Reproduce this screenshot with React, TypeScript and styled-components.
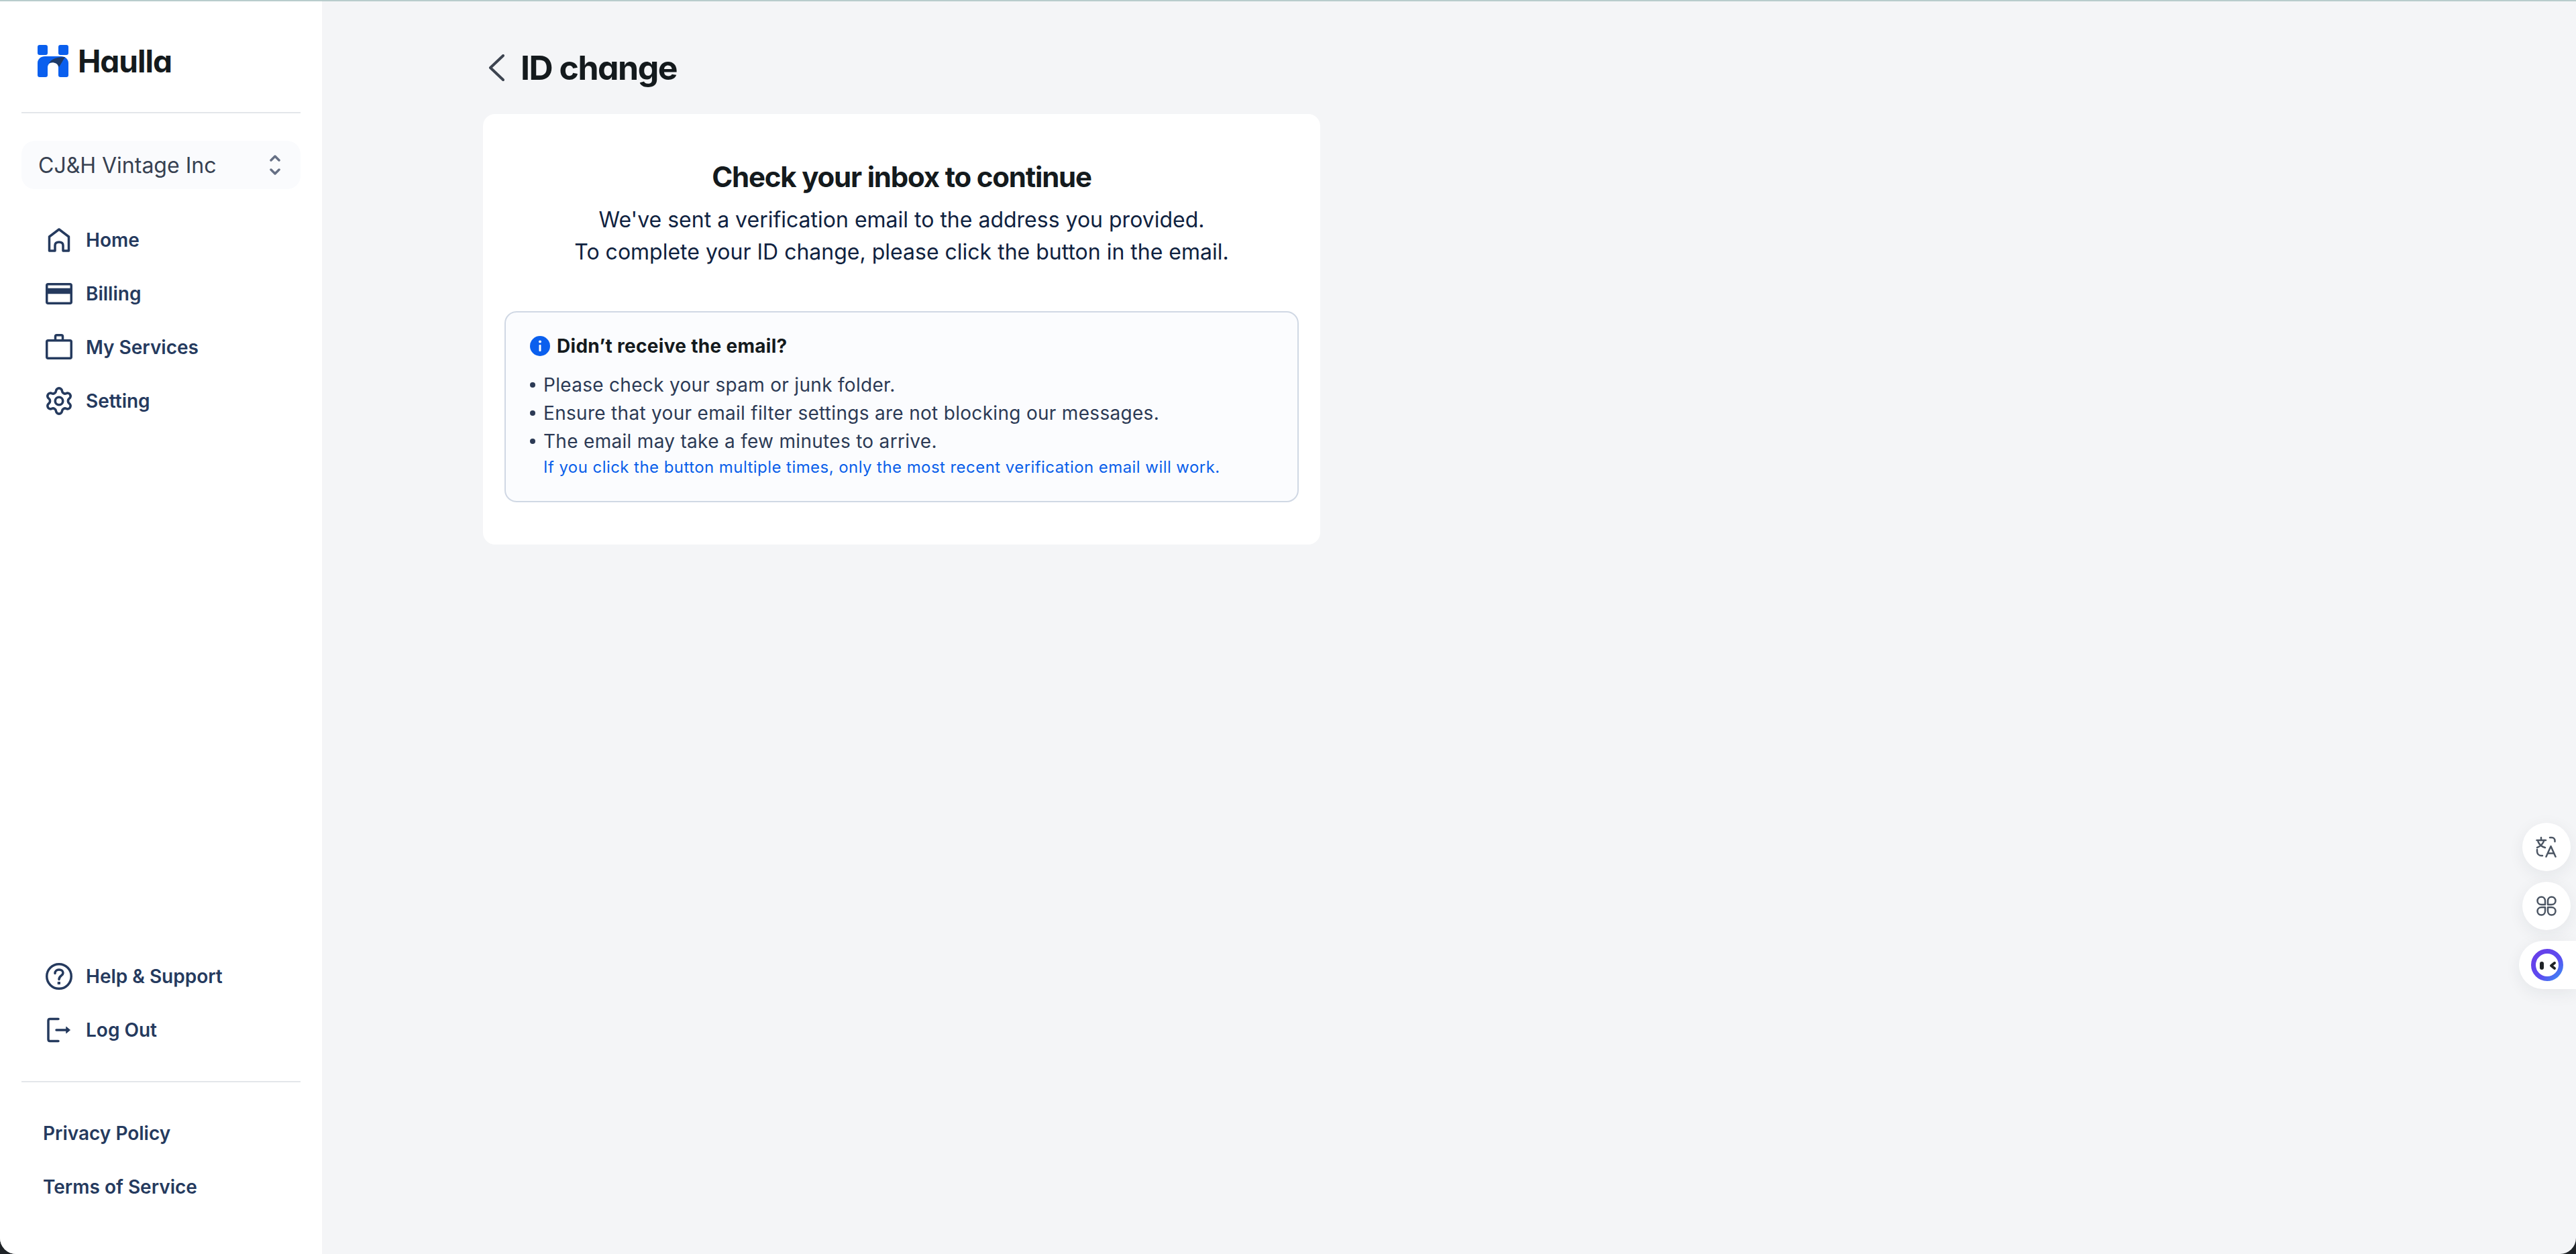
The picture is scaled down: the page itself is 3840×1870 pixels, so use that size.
import React from 'react';
import styled, { createGlobalStyle } from 'styled-components';
import { Settings } from 'lucide-react';

const GlobalStyle = createGlobalStyle`
  html, body {
    margin: 0;
    padding: 0;
    height: 100%;
    background: #1f2327;
  }
  #root {
    height: 100%;
  }
  * {
    box-sizing: border-box;
  }
`;

const Page = styled.div`
  position: relative;
  display: flex;
  height: 100vh;
  overflow: hidden;
  border-top: 2px solid #b8cccc;
  border-radius: 0 0 24px 24px;
  background: #f4f5f7;
  font-family: Inter, 'Liberation Sans', sans-serif;
`;

const Sidebar = styled.aside`
  display: flex;
  flex-direction: column;
  flex: none;
  width: 480px;
  padding: 0 32px 60px;
  background: #ffffff;
`;

const LogoRow = styled.div`
  display: flex;
  align-items: center;
  gap: 14px;
  height: 165px;
  padding: 12px 0 0 24px;
`;

const LogoText = styled.span`
  font-size: 46px;
  font-weight: 700;
  letter-spacing: -1px;
  color: #141a1d;
  font-feature-settings: 'cv11' 1;
`;

const Divider = styled.hr`
  flex: none;
  width: 100%;
  height: 2px;
  margin: 0;
  border: 0;
  background: #e3e6ea;
`;

const Select = styled.div`
  display: flex;
  align-items: center;
  justify-content: space-between;
  flex: none;
  height: 72px;
  margin-top: 41px;
  padding: 0 30px 0 25px;
  border-radius: 20px;
  background: #fafbfd;
  font-size: 32px;
  color: #374151;
`;

const Nav = styled.nav<{ $bottom?: boolean }>`
  display: flex;
  flex-direction: column;
  margin-top: ${({ $bottom }) => ($bottom ? 'auto' : '36px')};
  margin-bottom: ${({ $bottom }) => ($bottom ? '36px' : '0')};
`;

const NavItem = styled.a`
  display: flex;
  align-items: center;
  gap: 20px;
  height: 80px;
  padding-left: 36px;
  font-size: 28px;
  font-weight: 600;
  color: #253a5e;
`;

const FooterLinks = styled.div`
  display: flex;
  flex-direction: column;
  margin-top: 36px;
`;

const FooterLink = styled.a`
  display: flex;
  align-items: center;
  height: 80px;
  padding-left: 32px;
  font-size: 28px;
  font-weight: 600;
  color: #253a5e;
`;

const Main = styled.main`
  flex: 1;
  padding: 0 0 0 240px;
`;

const TitleRow = styled.div`
  display: flex;
  align-items: center;
  gap: 24px;
  height: 168px;
  padding: 30px 0 0 8px;
`;

const Title = styled.h1`
  margin: 0;
  font-size: 50px;
  font-weight: 700;
  letter-spacing: -1.5px;
  color: #141a1d;
  font-feature-settings: 'cv11' 1;
`;

const Card = styled.section`
  width: 1248px;
  height: 642px;
  padding: 64px 32px 0;
  border-radius: 18px;
  background: #ffffff;
`;

const CardTitle = styled.h2`
  margin: 0 0 10px;
  font-size: 42px;
  line-height: 60px;
  font-weight: 700;
  letter-spacing: -1.2px;
  text-align: center;
  color: #141a1d;
  font-feature-settings: 'cv11' 1;
`;

const CardText = styled.p`
  margin: 0;
  font-size: 32px;
  line-height: 48px;
  text-align: center;
  color: #0f2240;
`;

const InfoBox = styled.div`
  height: 285px;
  margin-top: 64px;
  padding: 30px 36px 0;
  border: 2px solid #d0d8e4;
  border-radius: 18px;
  background: #fbfcfe;
`;

const InfoHeading = styled.div`
  display: flex;
  align-items: center;
  gap: 10px;
  height: 40px;
  margin-bottom: 17px;
  font-size: 28px;
  font-weight: 700;
  letter-spacing: 0.3px;
  color: #141a1d;
`;

const InfoList = styled.ul`
  margin: 0;
  padding: 0;
  list-style: none;
`;

const InfoItem = styled.li`
  display: flex;
  gap: 12px;
  font-size: 28px;
  line-height: 42px;
  letter-spacing: 0.3px;
  color: #2c3a55;
  &::before {
    content: '';
    flex: none;
    width: 8px;
    height: 8px;
    margin-top: 17px;
    border-radius: 50%;
    background: #2c3a55;
  }
`;

const InfoNote = styled.div`
  padding-left: 20px;
  font-size: 24px;
  line-height: 36px;
  letter-spacing: 0.44px;
  color: #0a5fea;
`;

const FloatingDock = styled.div`
  position: absolute;
  right: 0;
  top: 1225px;
  display: flex;
  flex-direction: column;
  align-items: flex-end;
  gap: 16px;
`;

const DockButton = styled.div<{ $docked?: boolean }>`
  display: flex;
  align-items: center;
  justify-content: center;
  width: ${({ $docked }) => ($docked ? '85px' : '72px')};
  height: 72px;
  margin-right: ${({ $docked }) => ($docked ? '0' : '8px')};
  padding-right: ${({ $docked }) => ($docked ? '1px' : '0')};
  border-radius: ${({ $docked }) => ($docked ? '36px 0 0 36px' : '50%')};
  background: #ffffff;
  box-shadow: 0 6px 24px rgba(31, 41, 55, 0.07);
`;

const SettingsIcon = styled(Settings)`
  margin: -3px;
  flex: none;
`;

function Logo() {
  return (
    <svg width="46" height="48" viewBox="0 0 46 48">
      <rect x="0" y="0" width="15" height="15" rx="3" fill="#0a5fee" />
      <rect x="31" y="0" width="15" height="15" rx="3" fill="#0a5fee" />
      <path
        d="M0 27C0 21 5 17 11 17H35C41 17 46 21 46 27V45C46 47 45 48 43 48H34C32 48 31 47 31 45V34C31 29 28 26 23 26C18 26 15 29 15 34V45C15 47 14 48 12 48H3C1 48 0 47 0 45Z"
        fill="#0a5fee"
      />
      <path d="M17 27C21 21 28 18 41 18C38 23 35 28 32 33C30 28 25 25 17 27Z" fill="#1f3a66" />
    </svg>
  );
}

function NavIcon({ children }: { children: React.ReactNode }) {
  return (
    <svg
      width="40"
      height="40"
      viewBox="0 0 40 40"
      fill="none"
      stroke="#253a5e"
      strokeWidth="3.5"
      strokeLinejoin="round"
      strokeLinecap="round"
    >
      {children}
    </svg>
  );
}

const HomeIcon = () => (
  <NavIcon>
    <path d="M5.500 36V15L20 4L34.500 15V36H26V28C26 25 24 23 20 23C16 23 14 25 14 28V36Z" />
  </NavIcon>
);

const CardIcon = () => (
  <NavIcon>
    <rect x="1.750" y="5.750" width="36.500" height="28.500" rx="2" />
    <rect x="1.750" y="13.500" width="36.500" height="5" fill="#253a5e" />
  </NavIcon>
);

const BriefcaseIcon = () => (
  <NavIcon>
    <rect x="1.750" y="9.750" width="36.500" height="26.500" rx="2" />
    <path d="M14.500 9V4C14.500 2.500 15.500 1.750 16.500 1.750H23.500C24.500 1.750 25.500 2.500 25.500 4V9" />
  </NavIcon>
);

const HelpIcon = () => (
  <NavIcon>
    <circle cx="20" cy="20" r="18.250" />
    <path d="M14 15.500C14 12 16.500 10 20 10C23.500 10 26 12 26 15C26 19 20 19 20 24.500" />
    <rect x="18.500" y="28.500" width="3" height="3" fill="#253a5e" strokeWidth="1" />
  </NavIcon>
);

const LogoutIcon = () => (
  <NavIcon>
    <path d="M19 3.500H6.500C5 3.500 4 4.500 4 6V34C4 35.500 5 36.500 6.500 36.500H19" />
    <path d="M16 20H32" />
    <path d="M31 15.500L36.500 20L31 24.500Z" fill="#253a5e" strokeWidth="1" />
  </NavIcon>
);

const ChevronUpDown = () => (
  <svg width="16" height="30" viewBox="0 0 16 30" fill="none" stroke="#667085" strokeWidth="3.500" strokeLinecap="round" strokeLinejoin="round">
    <path d="M2 8L8 2L14 8" />
    <path d="M2 22L8 28L14 22" />
  </svg>
);

const BackChevron = () => (
  <svg width="24" height="40" viewBox="0 0 24 40" fill="none" stroke="#3d4450" strokeWidth="4" strokeLinecap="round" strokeLinejoin="round">
    <path d="M22 2L3 20L22 38" />
  </svg>
);

const InfoIcon = () => (
  <svg width="30" height="30" viewBox="0 0 30 30">
    <circle cx="15" cy="15" r="15" fill="#0a5fee" />
    <rect x="13.500" y="13" width="3" height="10" rx="1" fill="#ffffff" />
    <circle cx="15" cy="8.500" r="2" fill="#ffffff" />
  </svg>
);

const TranslateIcon = () => (
  <svg width="32" height="32" viewBox="0 0 32 32" fill="none" stroke="#4b5563" strokeWidth="2.500" strokeLinecap="round" strokeLinejoin="round">
    <path d="M1.500 6H15" />
    <path d="M8 2V6" />
    <path d="M12.500 6C11 11 7 15 2 17" />
    <path d="M3.500 8C5 12 9 15.500 14 17" />
    <path d="M21 2H24C26.500 2 28.500 4 28.500 7V8" />
    <path d="M2 20V22C2 26 4.500 29 8 29H10" />
    <path d="M15.500 30.500L22.500 15L29.500 30.500" />
    <path d="M18.500 25.500H26.500" />
  </svg>
);

const CommandIcon = () => (
  <svg width="30" height="30" viewBox="0 0 30 30" fill="none" stroke="#4b5563" strokeWidth="2.500" strokeLinejoin="round">
    <path d="M13 13H7.500C4 13 1.500 10.500 1.500 7.500C1.500 4 4 1.500 7.500 1.500C10.500 1.500 13 4 13 7.500Z" />
    <path d="M17 13H22.500C26 13 28.500 10.500 28.500 7.500C28.500 4 26 1.500 22.500 1.500C19.500 1.500 17 4 17 7.500Z" />
    <path d="M13 17H7.500C4 17 1.500 19.500 1.500 22.500C1.500 26 4 28.500 7.500 28.500C10.500 28.500 13 26 13 22.500Z" />
    <path d="M17 17H22.500C26 17 28.500 19.500 28.500 22.500C28.500 26 26 28.500 22.500 28.500C19.500 28.500 17 26 17 22.500Z" />
  </svg>
);

const AssistantIcon = () => (
  <svg width="48" height="48" viewBox="0 0 48 48">
    <defs>
      <linearGradient id="assistantRing" x1="0" y1="0" x2="1" y2="1">
        <stop offset="0" stopColor="#6a3de8" />
        <stop offset="0.6" stopColor="#5b4cf0" />
        <stop offset="1" stopColor="#3b8cf5" />
      </linearGradient>
    </defs>
    <circle cx="24" cy="24" r="20.500" fill="#ffffff" stroke="url(#assistantRing)" strokeWidth="7" />
    <rect x="13" y="19" width="6" height="12" rx="3" fill="#1f2327" />
    <path d="M35 21L30 25L35 29" fill="none" stroke="#1f2327" strokeWidth="4" strokeLinecap="round" strokeLinejoin="round" />
  </svg>
);

const mainNav = [
  { label: 'Home', icon: <HomeIcon /> },
  { label: 'Billing', icon: <CardIcon /> },
  { label: 'My Services', icon: <BriefcaseIcon /> },
  { label: 'Setting', icon: <SettingsIcon size={46} color="#253a5e" strokeWidth={1.9} /> },
];

const bottomNav = [
  { label: 'Help & Support', icon: <HelpIcon /> },
  { label: 'Log Out', icon: <LogoutIcon /> },
];

const tips = [
  'Please check your spam or junk folder.',
  'Ensure that your email filter settings are not blocking our messages.',
  'The email may take a few minutes to arrive.',
];

export default function App() {
  return (
    <>
      <GlobalStyle />
      <Page>
        <Sidebar>
          <LogoRow>
            <Logo />
            <LogoText>Haulla</LogoText>
          </LogoRow>
          <Divider />
          <Select>
            CJ&amp;H Vintage Inc
            <ChevronUpDown />
          </Select>
          <Nav>
            {mainNav.map((item) => (
              <NavItem key={item.label}>
                {item.icon}
                {item.label}
              </NavItem>
            ))}
          </Nav>
          <Nav $bottom>
            {bottomNav.map((item) => (
              <NavItem key={item.label}>
                {item.icon}
                {item.label}
              </NavItem>
            ))}
          </Nav>
          <Divider />
          <FooterLinks>
            <FooterLink>Privacy Policy</FooterLink>
            <FooterLink>Terms of Service</FooterLink>
          </FooterLinks>
        </Sidebar>
        <Main>
          <TitleRow>
            <BackChevron />
            <Title>ID change</Title>
          </TitleRow>
          <Card>
            <CardTitle>Check your inbox to continue</CardTitle>
            <CardText>We've sent a verification email to the address you provided.</CardText>
            <CardText>To complete your ID change, please click the button in the email.</CardText>
            <InfoBox>
              <InfoHeading>
                <InfoIcon />
                Didn’t receive the email?
              </InfoHeading>
              <InfoList>
                {tips.map((tip) => (
                  <InfoItem key={tip}>{tip}</InfoItem>
                ))}
              </InfoList>
              <InfoNote>If you click the button multiple times, only the most recent verification email will work.</InfoNote>
            </InfoBox>
          </Card>
        </Main>
        <FloatingDock>
          <DockButton>
            <TranslateIcon />
          </DockButton>
          <DockButton>
            <CommandIcon />
          </DockButton>
          <DockButton $docked>
            <AssistantIcon />
          </DockButton>
        </FloatingDock>
      </Page>
    </>
  );
}
